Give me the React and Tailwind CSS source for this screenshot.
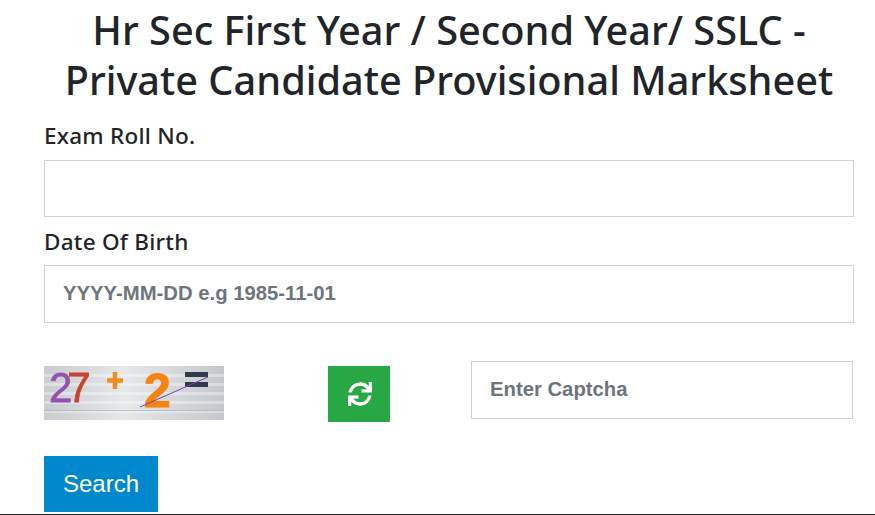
import React from "react";
import { FaSync } from "react-icons/fa";

function Captcha() {
  return (
    <svg width="180" height="54" viewBox="0 0 180 54" className="block blur-[0.4px] overflow-visible">
      <defs>
        <linearGradient id="cap" x1="0" y1="0" x2="1" y2="0">
          <stop offset="0" stopColor="#c8cbcf" />
          <stop offset="0.45" stopColor="#e6e8ea" />
          <stop offset="1" stopColor="#c4c8cc" />
        </linearGradient>
      </defs>
      <rect width="180" height="54" fill="url(#cap)" />
      {[8, 17, 26, 35, 44].map((y) => (
        <rect key={y} x="0" y={y} width="180" height="3" fill="#ffffff" opacity="0.35" />
      ))}
      <rect x="0" y="44" width="180" height="1" fill="#9ea3a9" opacity="0.6" />
      <text x="5" y="36" fontFamily="Liberation Sans, sans-serif" fontSize="42" strokeWidth="0.8">
        <tspan fill="#9452b0" stroke="#9452b0">2</tspan>
        <tspan fill="#c9442f" stroke="#c9442f" dx="-5">7</tspan>
      </text>
      <path d="M71 6v17M63 14.5h16" stroke="#f28c1e" strokeWidth="4.5" />
      <text x="100" y="41" fontFamily="Liberation Sans, sans-serif" fontWeight="700" fontSize="48" fill="#f5830f" stroke="#f5830f" strokeWidth="1">2</text>
      <rect x="141" y="6" width="23" height="5" fill="#2f3a4c" />
      <rect x="141" y="16" width="23" height="5" fill="#2f3a4c" />
      <line x1="96" y1="41" x2="164" y2="11" stroke="#7c3fb5" strokeWidth="1" />
    </svg>
  );
}

export default function App() {
  return (
    <div className="w-[875px] h-[515px] overflow-hidden bg-white border-b border-[#222] font-['Noto_Sans',sans-serif] text-[#212529]">
      <div className="pl-[44px] pr-[21px]">
        <h1 className="pt-[5px] text-center text-[39.7px] leading-[50px] font-medium whitespace-nowrap">
          Hr Sec First Year / Second Year/ SSLC -<br />
          Private Candidate Provisional Marksheet
        </h1>
        <label className="block mt-[7px] text-[22.5px] tracking-[0.25px] leading-[48px] h-[48px] font-medium">
          Exam Roll No.
        </label>
        <input
          type="text"
          className="block w-[810px] h-[57px] px-[18px] border border-[#d1d1d1] bg-white outline-none"
        />
        <label className="block mt-[8px] h-[40px] text-[22.5px] tracking-[0.25px] leading-[34px] font-medium">
          Date Of Birth
        </label>
        <input
          type="text"
          placeholder="YYYY-MM-DD e.g 1985-11-01"
          className="block w-[810px] h-[58px] px-[18px] pb-[2px] border border-[#d1d1d1] bg-white outline-none font-['Liberation_Sans',sans-serif] text-[20.3px] font-bold placeholder:text-[#6c757d] placeholder:opacity-100"
        />
        <div className="flex items-start mt-[38px] h-[58px]">
          <div className="mt-[5px] shrink-0">
            <Captcha />
          </div>
          <button className="shrink-0 ml-[104px] mt-[5px] w-[62px] h-[56px] bg-[#28a745] flex items-center justify-center text-white">
            <FaSync className="w-[24px] h-[24px] translate-x-px" />
          </button>
          <input
            type="text"
            placeholder="Enter Captcha"
            className="shrink-0 ml-[81px] w-[382px] h-[58px] px-[18px] pb-[2px] border border-[#d1d1d1] bg-white outline-none font-['Liberation_Sans',sans-serif] text-[20.3px] font-bold placeholder:text-[#6c757d] placeholder:opacity-100"
          />
        </div>
        <button className="mt-[37px] block w-[114px] h-[56px] bg-[#0088cc] text-white font-['Liberation_Sans',sans-serif] text-[24px]">
          Search
        </button>
      </div>
    </div>
  );
}
